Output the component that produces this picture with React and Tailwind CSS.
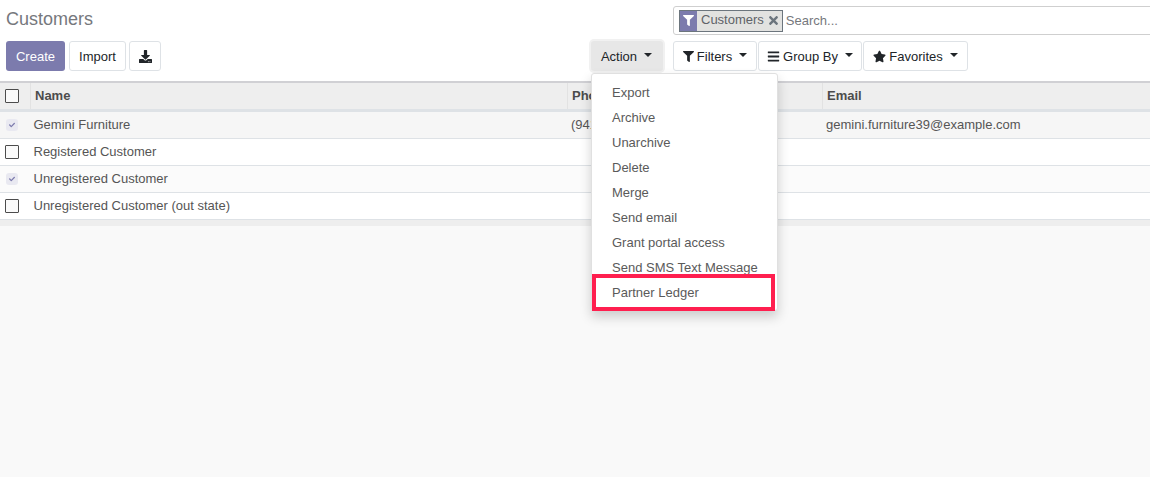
import { FaFilter, FaBars, FaStar, FaDownload, FaTimes, FaCheck } from 'react-icons/fa';

const rows = [
    { name: 'Gemini Furniture', phone: '(941)284-4875', email: 'gemini.furniture39@example.com', checked: true, bg: 'bg-[#f6f6f6]' },
    { name: 'Registered Customer', phone: '', email: '', checked: false, bg: 'bg-white' },
    { name: 'Unregistered Customer', phone: '', email: '', checked: true, bg: 'bg-[#fbfbfb]' },
    { name: 'Unregistered Customer (out state)', phone: '', email: '', checked: false, bg: 'bg-white' },
];

const actions = ['Export', 'Archive', 'Unarchive', 'Delete', 'Merge', 'Send email', 'Grant portal access', 'Send SMS Text Message', 'Partner Ledger'];

function Caret() {
    return <span className="inline-block w-0 h-0 border-x-[4px] border-x-transparent border-t-[4px] border-t-[#212529] ml-[7px] mb-[4px]" />;
}

function CheckBox({ checked }) {
    if (checked) {
        return (
            <div className="w-[12px] h-[12px] ml-[6px] rounded-[3px] bg-[#e9e9f1] flex items-center justify-center text-[#7c7bad]">
                <FaCheck className="w-[6px] h-[6px]" />
            </div>
        );
    }
    return <div className="w-[14px] h-[14px] ml-[5px] rounded-[1px] border-[1.5px] border-[#4c4c4c] bg-[#fafafa]" />;
}

function FilterButton({ icon: Icon, label, w, iconSize }) {
    return (
        <button className={`${w} h-[30px] pt-px flex items-center justify-center rounded-[3px] border border-[#dee2e6] bg-white text-[13px] text-[#212529]`}>
            <Icon className={`${iconSize} mr-[3px]`} />
            {label}
            <Caret />
        </button>
    );
}

export default function App() {
    return (
        <div className="w-[1150px] h-[477px] overflow-hidden flex flex-col bg-[#f9f9f9] font-['Liberation_Sans',Arial,sans-serif] text-[13px] text-[#4c4c4c]">
            {/* Control panel */}
            <div className="h-[81px] shrink-0 bg-white flex">
                <div className="w-[673px] shrink-0 pl-[6px] flex flex-col">
                    <div className="h-[41px] pt-[7px] text-[18px] leading-[25px] text-[#76787d]">Customers</div>
                    <div className="flex items-center">
                        <button className="w-[59px] h-[30px] pt-px rounded-[3px] bg-[#7c7bad] text-white text-[13px]">Create</button>
                        <button className="w-[57px] h-[30px] pt-px ml-[4px] rounded-[3px] border border-[#dee2e6] bg-white text-[13px] text-[#212529]">Import</button>
                        <button className="w-[32px] h-[30px] ml-[3px] rounded-[3px] border border-[#dee2e6] bg-white flex items-center justify-center text-[#212529]">
                            <FaDownload className="w-[13px] h-[13px]" />
                        </button>
                        <div className="relative ml-auto mr-[10px]">
                            <button className="w-[72px] h-[30px] pt-px pr-px rounded-[3px] bg-[#e7e7e7] shadow-[0_0_0_2px_#f1f1f1] text-[13px] text-[#212529]">
                                Action
                                <Caret />
                            </button>
                            {/* Open dropdown */}
                            <div className="absolute z-10 left-0 top-[32px] w-[187px] h-[238px] pt-[6px] bg-white rounded-[3px] border border-[#e0e0e0] shadow-[0_6px_12px_rgba(0,0,0,0.18)]">
                                {actions.map((a) => (
                                    <div key={a} className="h-[25px] pl-[20px] leading-[25px] text-[13px] text-[#5a5a5a] whitespace-nowrap">{a}</div>
                                ))}
                                <div className="absolute left-0 top-[200px] w-[183px] h-[37px] border-[4px] border-[#ff1f4f]" />
                            </div>
                        </div>
                    </div>
                </div>
                <div className="flex-1 min-w-0 flex flex-col">
                    <div className="mt-[6px] h-[29px] w-[500px] shrink-0 border border-[#cfcfcf] rounded-[3px] flex items-center pl-[5px]">
                        <div className="h-[22px] flex items-center border border-[#6c757d] bg-[#e2e2e0]">
                            <div className="w-[17px] h-full bg-[#7c7bad] flex items-center justify-center text-white">
                                <FaFilter className="w-[11px] h-[11px]" />
                            </div>
                            <span className="ml-[4px] text-[13px] text-[#5f6368] -mt-[2px]">Customers</span>
                            <FaTimes className="w-[13px] h-[13px] ml-[3px] mr-[2px] text-[#6c757d]" />
                        </div>
                        <span className="ml-[3px] text-[13px] text-[#76787d]">Search...</span>
                    </div>
                    <div className="mt-[6px] flex">
                        <FilterButton icon={FaFilter} label="Filters" w="w-[84px]" iconSize="w-[11px] h-[11px]" />
                        <div className="ml-px"><FilterButton icon={FaBars} label="Group By" w="w-[104px]" iconSize="w-[13px] h-[13px]" /></div>
                        <div className="ml-px"><FilterButton icon={FaStar} label="Favorites" w="w-[105px]" iconSize="w-[13px] h-[13px]" /></div>
                    </div>
                </div>
            </div>

            {/* Table */}
            <div className="shrink-0">
                <div className="grid grid-cols-[31px_537px_255px_327px] h-[31px] bg-[#eeeeee] border-t-2 border-b-[3px] border-t-[#d0d0d4] border-b-[#dee2e6] font-bold text-[#4c4c4c]">
                    <div className="flex items-center border-r border-[#e2e2e2]"><CheckBox /></div>
                    <div className="flex items-center pl-[4px] border-r border-[#e2e2e2]">Name</div>
                    <div className="flex items-center pl-[4px] border-r border-[#e2e2e2]">Phone</div>
                    <div className="flex items-center pl-[4px]">Email</div>
                </div>
                {rows.map((r) => (
                    <div key={r.name} className={`grid grid-cols-[31px_537px_255px_327px] h-[27px] ${r.bg} border-b border-[#dee2e6] text-[#555555]`}>
                        <div className="flex items-center"><CheckBox checked={r.checked} /></div>
                        <div className="flex items-center pl-[2.5px]">{r.name}</div>
                        <div className="flex items-center pl-[3px]">{r.phone}</div>
                        <div className="flex items-center pl-[3px]">{r.email}</div>
                    </div>
                ))}
                <div className="h-[6px] bg-[#eeeeee]" />
            </div>
        </div>
    );
}
